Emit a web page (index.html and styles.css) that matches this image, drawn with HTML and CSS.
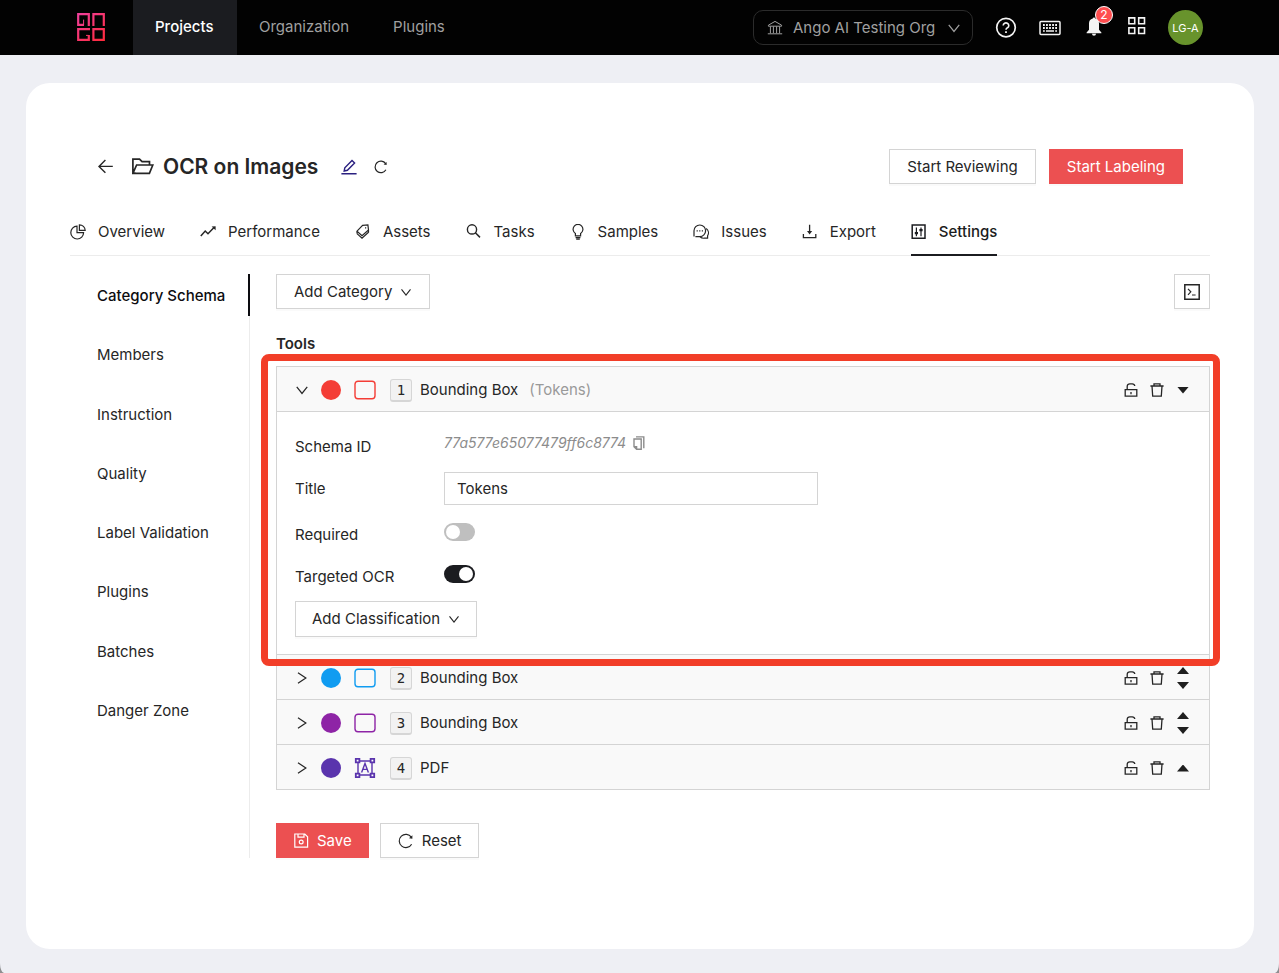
FILE: index.html
```html
<!DOCTYPE html>
<html lang="en">
<head>
<meta charset="utf-8">
<meta name="viewport" content="width=device-width, initial-scale=1">
<title>OCR on Images – Category Schema</title>
<link rel="stylesheet" href="styles.css">
</head>
<body>
<svg class="sprite" aria-hidden="true">
  <symbol id="i-down" viewBox="0 0 16 16"><path d="M2 4.5 8 12 14 4.5"/></symbol>
  <symbol id="i-right" viewBox="0 0 16 16"><path d="M3.4 2 12.4 8 3.4 14"/></symbol>
  <symbol id="i-lock" viewBox="0 0 16 16"><path d="M2.2 7.6h11.6v6.6H2.2zM4.2 7.6V4.4a2.6 2.6 0 0 1 2.6-2.6h2.4a2.6 2.6 0 0 1 2.6 2.2M8 10v2.2" stroke-width="1.3"/></symbol>
  <symbol id="i-trash" viewBox="0 0 16 16"><path d="M1.4 4h13.2M5 4V1.8h6V4M3 4l.7 10.2h8.6L13 4" stroke-width="1.3"/></symbol>
  <symbol id="i-box" viewBox="0 0 22 20"><rect x="1" y="1.2" width="20" height="17.6" rx="3"/></symbol>
  <symbol id="i-reload" viewBox="0 0 16 16"><path d="M13.6 11.2A6.6 6.6 0 1 1 13.3 4.2"/><path d="M14.4 2.2v3.6l-3.4-.6z" fill="currentColor" stroke="none"/></symbol>
</svg>
<div class="app">
  <header class="topbar">
    <a class="logo" href="#" aria-label="Ango home">
      <svg viewBox="0 0 28 28" width="28" height="28" fill="none" stroke="url(#lg)" stroke-width="2.2">
        <defs><linearGradient id="lg" gradientUnits="userSpaceOnUse" x1="2" y1="0" x2="26" y2="28"><stop offset="0" stop-color="#f0409c"/><stop offset="1" stop-color="#ff2a3c"/></linearGradient></defs>
        <path d="M11.8 13V1.2H1.2v10.6H7M16.4 13V1.2h10.4V13M13 16.2H1.2v10.6h10.6V22M16.4 16.2h10.4v10.6H16.4z"/>
        <path d="M6.6 12V6.6M9 22.4h2.6" stroke-width="1"/>
      </svg>
    </a>
    <nav class="mainnav" aria-label="Main">
      <a class="mainnav-link is-active" href="#">Projects</a>
      <a class="mainnav-link" href="#">Organization</a>
      <a class="mainnav-link" href="#">Plugins</a>
    </nav>
    <div class="tools">
      <button class="org" type="button">
        <svg class="icon thin" viewBox="0 0 16 16"><path d="M1.4 5.2 8 1.4l6.6 3.8v1H1.4zM3.4 6.4v6.8M6.4 6.4v6.8M9.6 6.4v6.8M12.6 6.4v6.8M.8 13.8h14.4"/></svg>
        <span class="org-name">Ango AI Testing Org</span>
        <svg class="icon i14"><use href="#i-down"/></svg>
      </button>
      <button class="tool" type="button" aria-label="Help"><svg viewBox="0 0 22 22" width="22" height="22"><circle cx="11" cy="10.6" r="9.3" stroke-width="1.7"/><path d="M8.2 8.5a2.8 2.6 0 1 1 4.3 2.2c-.9.6-1.5 1-1.5 2.1" stroke-width="1.6"/><path d="M11 14.2V16" stroke-width="1.8"/></svg></button>
      <button class="tool" type="button" aria-label="Keyboard shortcuts"><svg viewBox="0 0 22 16" width="22" height="16"><rect x="1" y="1.6" width="20" height="12.8" rx="1" stroke-width="1.5"/><path d="M4 5h14M4 8h14" stroke-width="1.9" stroke-dasharray="1.8 1.25"/><path d="M4 11h1.8M7 11h8M16.2 11H18" stroke-width="1.6"/></svg></button>
      <button class="tool bell" type="button" aria-label="Notifications, 2 new"><svg viewBox="0 0 16 22" width="16" height="22"><path d="M8 .4a1.2 1.2 0 0 1 1.2 1.2A5 5 0 0 1 13 6.6v6.2l2.4 2.6v.8H.6v-.8L3 12.8V6.6a5 5 0 0 1 3.8-5A1.2 1.2 0 0 1 8 .4zM6 16.8h4a2 2 0 0 1-4 0z" fill="currentColor" stroke="none"/></svg><span class="badge">2</span></button>
      <button class="tool" type="button" aria-label="Apps"><svg viewBox="0 0 18 22" width="18" height="22"><path d="M.9 .9h5.8v5.8H.9zM10.7 .9h5.8v5.8h-5.8zM.9 10.7h5.8v5.8H.9zM10.7 10.7h5.8v5.8h-5.8z" stroke-width="1.6"/></svg></button>
      <button class="avatar" type="button">LG-A</button>
    </div>
  </header>

  <main class="card">
    <div class="titlebar">
      <a class="plain" href="#" aria-label="Back"><svg class="icon i18" viewBox="0 0 18 18"><path d="M15.8 8.4H2.2M8.4 2 2 8.4l6.4 6.4" stroke-width="1.4"/></svg></a>
      <svg class="folder" viewBox="0 0 22 18" width="22" height="18"><path d="M3.6 15.2.9 15.3V1.1h6.6l2.6 2.6h7.4v3.2M.9 15.4 4.6 7h16.2l-3.4 8.4z"/></svg>
      <h1>OCR on Images</h1>
      <button class="plain edit" type="button" aria-label="Rename"><svg class="icon" viewBox="0 0 16 16"><path d="M.4 14.8h15.2M3.2 12l.6-3.2L11 1.4 13.6 4l-7.2 7.3z" stroke-width="1.4"/></svg></button>
      <button class="plain" type="button" aria-label="Refresh"><svg class="icon i14"><use href="#i-reload"/></svg></button>
      <div class="actions">
        <button class="btn" type="button">Start Reviewing</button>
        <button class="btn primary" type="button">Start Labeling</button>
      </div>
    </div>

    <nav class="tabs" aria-label="Project">
      <a class="tab" href="#"><svg class="icon" viewBox="0 0 16 16"><path d="M7 2.2A6.4 6.4 0 1 0 13.6 8.6H7zM9.4.8v5.6h5.8A5.8 5.8 0 0 0 9.4.8z"/></svg>Overview</a>
      <a class="tab" href="#"><svg class="icon" viewBox="0 0 16 16"><path d="M.8 12 5.2 7 8 9.8 14 3.6" stroke-width="1.5"/><path d="M15.6 2.2v4l-4-3.6z" fill="currentColor" stroke="none"/></svg>Performance</a>
      <a class="tab" href="#"><svg class="icon" viewBox="0 0 16 16"><path d="M7.6 1.4 12.9.9 13.5 6 7 11.6 2 7.2zM2 9.6l5 4.6 6.5-6M2 7.2v2.4M13.5 6v2.4"/><path d="M10.6 3.2v1.4"/></svg>Assets</a>
      <a class="tab" href="#"><svg class="icon" viewBox="0 0 16 16"><circle cx="6" cy="5.4" r="4.6" stroke-width="1.4"/><path d="M9.4 8.8 14 13.4" stroke-width="1.5"/></svg>Tasks</a>
      <a class="tab" href="#"><svg class="icon" viewBox="0 0 16 16"><path d="M5.4 11.8V9.4a4.9 4.9 0 1 1 5.2 0v2.4zM5.6 13.6h4.8M6.2 15.2h3.6"/></svg>Samples</a>
      <a class="tab" href="#"><svg class="icon" viewBox="0 0 16 16"><path d="M1 12.4V6.8a5.8 5.8 0 1 1 5.8 5.8H2.4M13.2 4.4a5.6 5.6 0 0 1 1.4 7.4v2.4h-3.2a5.4 5.4 0 0 1-4.4-1.4"/><path d="M3.6 6.8h1.2M6.2 6.8h1.2M8.8 6.8H10"/></svg>Issues</a>
      <a class="tab" href="#"><svg class="icon" viewBox="0 0 16 16"><path d="M7.6.8v7.4M1.4 10v3.6h12.4V10" stroke-width="1.3"/><path d="M5 7h5.2l-2.6 3.4z" fill="currentColor" stroke="none"/></svg>Export</a>
      <a class="tab is-active" href="#" aria-current="page"><svg class="icon" viewBox="0 0 16 16"><path d="M1.2.9h12.8v13.4H1.2z" stroke-width="1.5"/><path d="M5.4 3.4v8.8M10 3.4v8.8"/><path d="M3.8 8h3.2v2.2H3.8zM8.4 5h3.2v2.2H8.4z" fill="currentColor" stroke="none"/></svg>Settings</a>
    </nav>

    <div class="content">
      <nav class="side" aria-label="Settings">
        <ul class="side-list">
          <li><a class="side-link is-active" href="#">Category Schema</a></li>
          <li><a class="side-link" href="#">Members</a></li>
          <li><a class="side-link" href="#">Instruction</a></li>
          <li><a class="side-link" href="#">Quality</a></li>
          <li><a class="side-link" href="#">Label Validation</a></li>
          <li><a class="side-link" href="#">Plugins</a></li>
          <li><a class="side-link" href="#">Batches</a></li>
          <li><a class="side-link" href="#">Danger Zone</a></li>
        </ul>
      </nav>

      <section class="schema">
        <div class="schema-bar">
          <button class="btn" type="button">Add Category <svg class="icon i12"><use href="#i-down"/></svg></button>
          <button class="btn square" type="button" aria-label="Open code view"><svg class="icon" viewBox="0 0 16 16"><path d="M.8.8h14.4v14.4H.8z" stroke-width="1.5"/><path d="M4 4.8 6.8 7.8 4 10.8M8 11h3.6"/></svg></button>
        </div>
        <h2>Tools</h2>
        <div class="panels">
          <article class="panel highlighted">
            <div class="row">
              <button class="plain" type="button" aria-label="Collapse" aria-expanded="true"><svg class="icon i14"><use href="#i-down"/></svg></button>
              <span class="dot red"></span>
              <svg class="shape red"><use href="#i-box"/></svg>
              <kbd>1</kbd>
              <span>Bounding Box</span><span class="hint">(Tokens)</span>
              <span class="row-tools">
                <button class="plain" type="button" aria-label="Unlock"><svg class="icon"><use href="#i-lock"/></svg></button>
                <button class="plain" type="button" aria-label="Delete"><svg class="icon"><use href="#i-trash"/></svg></button>
                <span class="order"><button class="caret down" type="button" aria-label="Move down"></button></span>
              </span>
            </div>
            <div class="body">
              <div class="field id-field"><span class="name">Schema ID</span><span class="schema-id">77a577e65077479ff6c8774</span><button class="plain copy" type="button" aria-label="Copy ID"><svg class="icon i14" viewBox="0 0 14 14"><path d="M4 .9h7.8v11.4M2 3h7.2v10.2H4.6L2 10.6zM2 10.6h2.6v2.6"/></svg></button></div>
              <div class="field title-field"><label class="name" for="title">Title</label><input class="text" id="title" type="text" value="Tokens"></div>
              <div class="field"><label class="name" for="required">Required</label><input class="switch" id="required" type="checkbox"></div>
              <div class="field"><label class="name" for="ocr">Targeted OCR</label><input class="switch" id="ocr" type="checkbox" checked></div>
              <button class="btn compact add" type="button">Add Classification <svg class="icon i12"><use href="#i-down"/></svg></button>
            </div>
          </article>
          <article class="panel">
            <div class="row">
              <button class="plain" type="button" aria-label="Expand" aria-expanded="false"><svg class="icon i14"><use href="#i-right"/></svg></button>
              <span class="dot blue"></span>
              <svg class="shape blue"><use href="#i-box"/></svg>
              <kbd>2</kbd>
              <span>Bounding Box</span>
              <span class="row-tools">
                <button class="plain" type="button" aria-label="Unlock"><svg class="icon"><use href="#i-lock"/></svg></button>
                <button class="plain" type="button" aria-label="Delete"><svg class="icon"><use href="#i-trash"/></svg></button>
                <span class="order"><button class="caret up" type="button" aria-label="Move up"></button><button class="caret down" type="button" aria-label="Move down"></button></span>
              </span>
            </div>
          </article>
          <article class="panel">
            <div class="row">
              <button class="plain" type="button" aria-label="Expand" aria-expanded="false"><svg class="icon i14"><use href="#i-right"/></svg></button>
              <span class="dot purple"></span>
              <svg class="shape purple"><use href="#i-box"/></svg>
              <kbd>3</kbd>
              <span>Bounding Box</span>
              <span class="row-tools">
                <button class="plain" type="button" aria-label="Unlock"><svg class="icon"><use href="#i-lock"/></svg></button>
                <button class="plain" type="button" aria-label="Delete"><svg class="icon"><use href="#i-trash"/></svg></button>
                <span class="order"><button class="caret up" type="button" aria-label="Move up"></button><button class="caret down" type="button" aria-label="Move down"></button></span>
              </span>
            </div>
          </article>
          <article class="panel">
            <div class="row">
              <button class="plain" type="button" aria-label="Expand" aria-expanded="false"><svg class="icon i14"><use href="#i-right"/></svg></button>
              <span class="dot indigo"></span>
              <svg class="shape indigo" viewBox="0 0 22 20"><path d="M4 3h14M4 17h14M4 3v14M18 3v14"/><path d="M1.8.8h3.6v3.6H1.8zM16.6.8h3.6v3.6h-3.6zM1.8 15.6h3.6v3.6H1.8zM16.6 15.6h3.6v3.6h-3.6z" fill="#fff" stroke-width="1.8"/><path d="M7.6 14.4 11 5.4l3.4 9M8.8 11.4h4.4"/></svg>
              <kbd>4</kbd>
              <span>PDF</span>
              <span class="row-tools">
                <button class="plain" type="button" aria-label="Unlock"><svg class="icon"><use href="#i-lock"/></svg></button>
                <button class="plain" type="button" aria-label="Delete"><svg class="icon"><use href="#i-trash"/></svg></button>
                <span class="order"><button class="caret up" type="button" aria-label="Move up"></button></span>
              </span>
            </div>
          </article>
        </div>
        <div class="foot">
          <button class="btn compact primary" type="button"><svg class="icon" viewBox="0 0 16 16"><path d="M1.8 1h10l2.8 2.8v10.4H1.8zM5 1v3.2h6V1"/><circle cx="8.2" cy="9" r="1.9"/></svg>Save</button>
          <button class="btn" type="button"><svg class="icon"><use href="#i-reload"/></svg>Reset</button>
        </div>
      </section>
    </div>
  </main>
</div>
</body>
</html>
```

FILE: styles.css
```css
* { box-sizing: border-box; }

html { background: #8e8e90; }

body {
  margin: 0;
  color: #262626;
  font: 15px/24px Inter, "Liberation Sans", sans-serif;
}

button, input { font: inherit; color: inherit; }
button { cursor: pointer; }
a { color: inherit; text-decoration: none; }
svg { flex: none; }
.sprite { position: absolute; width: 0; height: 0; }

.app {
  display: flex;
  flex-direction: column;
  min-height: 100vh;
  background: #eeeff4;
  border-radius: 0 0 4px 4px / 0 0 10px 10px;
}

.icon {
  width: 16px;
  height: 16px;
  fill: none;
  stroke: currentColor;
  stroke-width: 1.2;
}
.icon.i18 { width: 18px; height: 18px; }
.icon.i14 { width: 14px; height: 14px; stroke-width: 1.4; }
.icon.i12 { width: 12px; height: 12px; stroke-width: 1.5; }
.icon.thin { stroke-width: 1; }

.plain {
  display: flex;
  padding: 0;
  border: 0;
  background: none;
}

/* Top bar */
.topbar {
  display: flex;
  height: 55px;
  background: #020202;
  color: #fff;
}
.logo { display: flex; padding: 13px 28px 0 77px; }
.mainnav { display: flex; }
.mainnav-link {
  padding: 0 22px;
  line-height: 54px;
  color: #a0a0a0;
}
.mainnav-link.is-active {
  min-width: 104px;
  background: #1b1c20;
  color: #fff;
  font-weight: 500;
}
.tools {
  display: flex;
  align-items: center;
  gap: 22px;
  margin-left: auto;
  padding-right: 76px;
}
.org {
  display: flex;
  align-items: center;
  gap: 10px;
  width: 220px;
  height: 35px;
  padding: 0 11px 0 13px;
  border: 1px solid #2b2b2b;
  border-radius: 10px;
  background: none;
  color: #a0a0a0;
}
.org-name { margin-right: auto; white-space: nowrap; }
.tool {
  display: flex;
  padding: 0;
  border: 0;
  background: none;
  color: #f4f4f4;
}
.tool svg { fill: none; stroke: currentColor; }
.bell { position: relative; margin: 0 4px 0 3px; }
.badge {
  position: absolute;
  top: -11px;
  left: 9px;
  width: 18px;
  height: 18px;
  border: 1px solid #fff;
  border-radius: 9px;
  background: #ff4d4f;
  color: #fff;
  font-size: 12px;
  line-height: 16px;
  text-align: center;
}
.avatar {
  width: 35px;
  height: 35px;
  padding: 0;
  border: 0;
  border-radius: 50%;
  background: #68932c;
  color: #fff;
  font-size: 11px;
}

/* Card */
.card {
  flex: 1;
  margin: 28px 25px 24px 26px;
  padding: 66px 44px 0;
  border-radius: 24px;
  background: #fff;
}
.titlebar {
  display: flex;
  align-items: center;
  padding: 0 27px;
}
.folder {
  margin: 0 9px 0 17px;
  fill: none;
  stroke: currentColor;
  stroke-width: 1.7;
}
h1 { margin: 0; font-size: 21px; font-weight: 600; line-height: 32px; }
.edit { margin: 0 17px 0 23px; color: #2a2080; }
.actions { display: flex; gap: 13px; margin-left: auto; }

.btn {
  display: flex;
  align-items: center;
  justify-content: center;
  gap: 8px;
  height: 35px;
  padding: 0 17px;
  border: 1px solid #d4d4d4;
  background: #fff;
  box-shadow: 0 2px 0 #00000005;
  white-space: nowrap;
}
.btn.compact { padding: 0 16px; }
.btn.primary { border-color: #ec5051; background: #ec5051; color: #fff; }
.btn.square { width: 36px; padding: 0; }

.tabs {
  display: flex;
  gap: 35px;
  margin-top: 24px;
  border-bottom: 1px solid #ececec;
}
.tab {
  display: flex;
  align-items: center;
  gap: 12px;
  height: 48px;
  margin-bottom: -1px;
  padding-top: 2px;
  border-bottom: 2px solid transparent;
}
.tab.is-active { border-color: #1b1c20; color: #1b1c20; font-weight: 500; }

/* Settings layout */
.content {
  display: flex;
  gap: 26px;
  margin-top: 18px;
}
.side {
  flex: none;
  width: 180px;
  border-right: 1px solid #ececec;
}
.side-list {
  display: flex;
  flex-direction: column;
  justify-content: space-between;
  height: 457px;
  margin: 0 -1px 0 0;
  padding: 0;
  list-style: none;
}
.side-link {
  display: block;
  height: 42px;
  padding-left: 27px;
  border-right: 2px solid transparent;
  line-height: 44px;
}
.side-link.is-active { border-color: #0c0c10; color: #0c0c10; font-weight: 500; }

.schema { flex: 1; min-width: 0; }
.schema-bar { display: flex; justify-content: space-between; }
h2 { margin: 23px 0 10px; font-size: 15px; font-weight: 600; line-height: 24px; }

/* Tool panels */
.panels { border: 1px solid #d4d4d4; border-bottom: 0; }
.panel { border-bottom: 1px solid #d4d4d4; }
.highlighted { position: relative; }
.highlighted::after {
  content: "";
  position: absolute;
  inset: -13px -11px -12px -16px;
  border: 7px solid #f23e28;
  border-radius: 8px;
  pointer-events: none;
}
.row {
  display: flex;
  align-items: center;
  height: 44px;
  padding: 2px 20px 0 18px;
  background: #f9f9f9;
}
.dot { width: 20px; height: 20px; margin: 0 13px 0 12px; border-radius: 50%; background: currentColor; }
.shape { width: 22px; height: 20px; fill: none; stroke: currentColor; stroke-width: 1.4; }
.red { color: #f43d36; }
.blue { color: #109cf1; }
.purple { color: #8e24a6; }
.indigo { color: #5a34ad; }
kbd {
  width: 22px;
  height: 23px;
  margin: 0 8px 0 14px;
  border: 1px solid #d6d6d6;
  border-bottom-width: 2px;
  border-radius: 3px;
  background: #f2f2f2;
  font: 14px/21px "DejaVu Sans Mono", monospace;
  text-align: center;
}
.hint { margin-left: 11px; color: #9a9a9a; }
.row-tools { display: flex; align-items: center; gap: 10px; margin-left: auto; }
.order { display: flex; flex-direction: column; gap: 8px; margin-left: 2px; }
.caret {
  width: 12px;
  height: 7px;
  padding: 0;
  border: 0;
  background: #1f1f1f;
}
.caret.up { clip-path: polygon(50% 0, 100% 100%, 0 100%); }
.caret.down { clip-path: polygon(0 0, 100% 0, 50% 100%); }

.body {
  padding: 20px 18px 17px;
  border-top: 1px solid #d4d4d4;
}
.field { display: flex; margin-bottom: 16px; line-height: 26px; }
.name { width: 149px; }
.id-field { margin-bottom: 10px; line-height: 30px; }
.schema-id { color: #8c8c8c; font-size: 14px; font-style: italic; line-height: 22px; }
.copy { align-self: flex-start; margin: 4px 0 0 6px; color: #8c8c8c; }
.title-field { margin-bottom: 17px; line-height: 33px; }
.text {
  flex: 0 1 374px;
  min-width: 0;
  height: 33px;
  padding: 0 12px;
  border: 1px solid #d4d4d4;
  background: #fff;
}
.switch {
  width: 31px;
  height: 18px;
  margin: 1px 0 0;
  padding: 2px;
  border-radius: 9px;
  background: #bfbfbf;
  appearance: none;
}
.switch::before {
  content: "";
  display: block;
  width: 14px;
  height: 14px;
  border-radius: 50%;
  background: #fff;
}
.switch:checked { background: #1b1c20; }
.switch:checked::before { margin-left: auto; }
.add { height: 36px; margin-top: -5px; }

.foot { display: flex; gap: 11px; margin-top: 33px; }
```
